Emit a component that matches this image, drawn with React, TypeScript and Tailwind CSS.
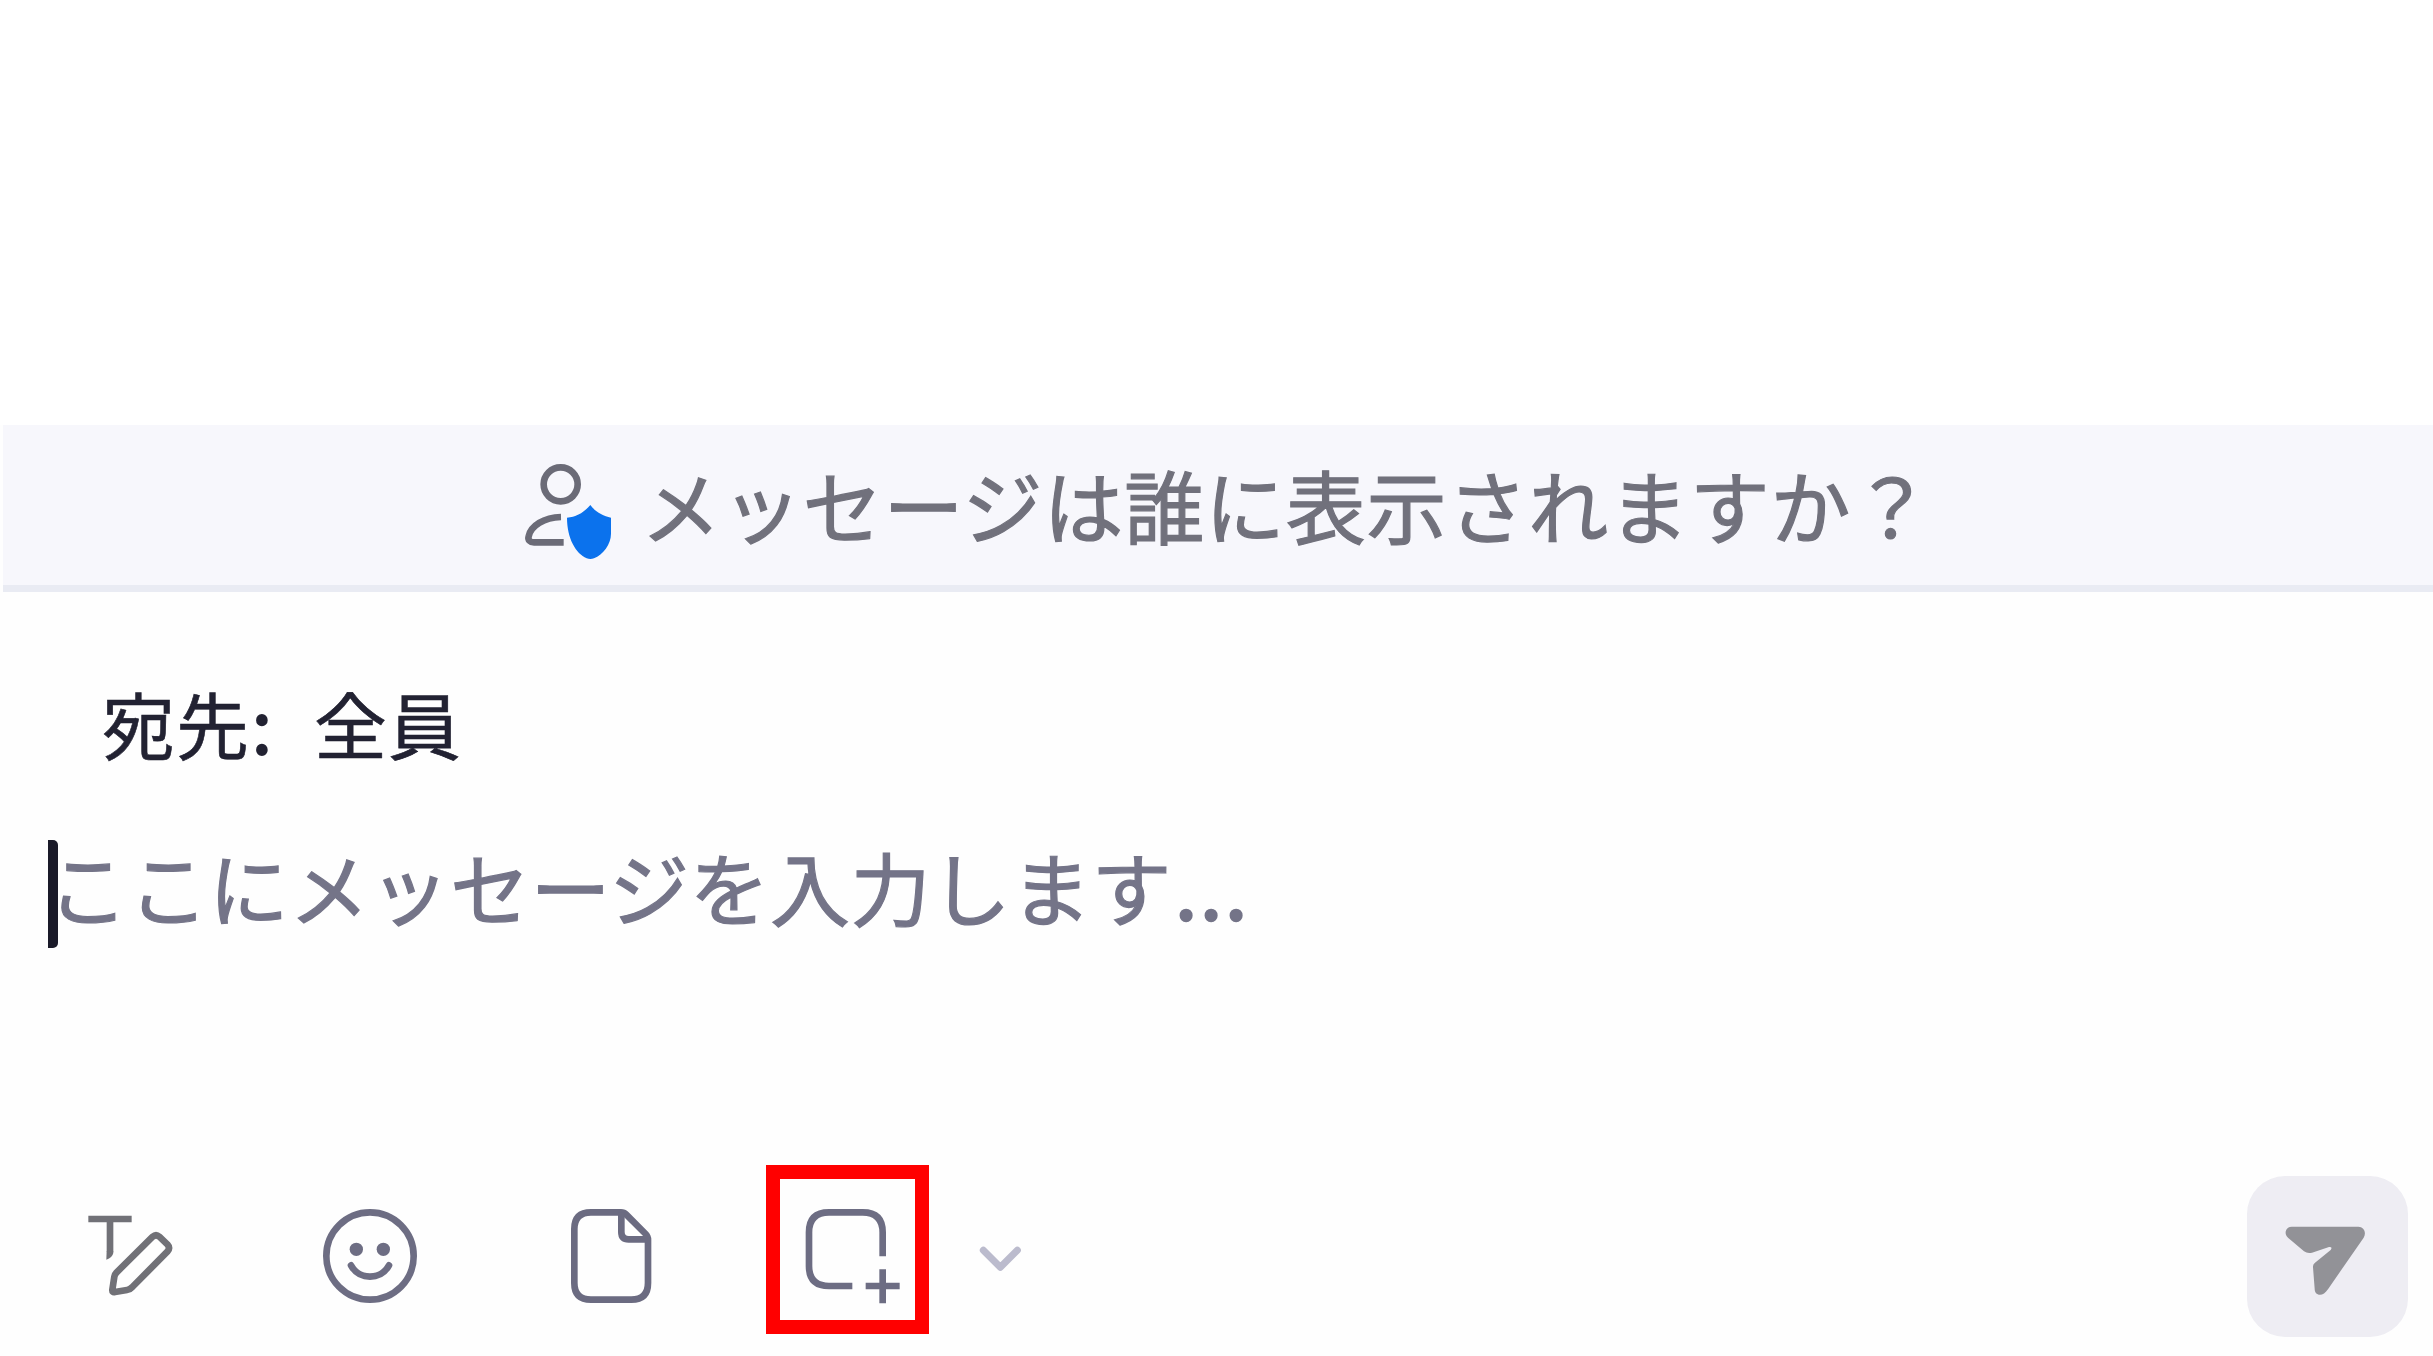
const JP = "font-['Noto_Sans_CJK_JP',sans-serif]";

function PersonShield() {
  return (
    <svg className="h-[100px] w-[92px] shrink-0" viewBox="0 0 276 300" fill="none">
      <circle cx="122" cy="73" r="51" stroke="#6b6b77" strokeWidth="20" />
      <path d="M123 171C72 172 32 198 26 229C23 240 30 247 42 247H131" stroke="#6b6b77" strokeWidth="20" />
      <path
        d="M211 135C223 153 248 168 273 173V221C273 252 249 285 222 295Q211 299 200 295C168 280 141 236 141 173C171 172 196 153 211 135Z"
        fill="#0b72ed"
      />
    </svg>
  );
}

function FormatIcon() {
  return (
    <svg className="h-[86px] w-[86px]" viewBox="84 100 258 258" fill="none" stroke="#717177" strokeWidth="20">
      <path d="M85 118H215" />
      <path d="M150 127V216" />
      <path d="M140 214H160V220Q157 234 139 240Z" fill="#717177" stroke="none" />
      <path d="M278 171Q288 162 298 171L322 194Q332 205 322 216L217 322Q210 330 201 331L165 337Q156 339 157 330L163 291Q164 284 170 278Z" strokeLinejoin="round" />
    </svg>
  );
}

function SmileIcon() {
  return (
    <svg className="h-[96px] w-[96px]" viewBox="786 85 288 288" fill="none">
      <circle cx="930" cy="229" r="131" stroke="#6d6d83" strokeWidth="20" />
      <circle cx="889" cy="209" r="20" fill="#6d6d83" />
      <circle cx="970" cy="209" r="20" fill="#6d6d83" />
      <path d="M873 257C898 302 962 302 987 257" stroke="#6d6d83" strokeWidth="20" strokeLinecap="round" />
    </svg>
  );
}

function FileIcon() {
  return (
    <svg className="h-[96px] w-[82px]" viewBox="90 85 246 288" fill="none" stroke="#6b6b81" strokeWidth="20">
      <path d="M153 98H243Q252 98 259 105L317 163Q324 170 324 180V310Q324 360 274 360H153Q103 360 103 310V148Q103 98 153 98Z" />
      <path d="M244 98V157Q244 179 266 179H324" />
    </svg>
  );
}

function AddSquareIcon() {
  return (
    <svg className="h-[96px] w-[96px]" viewBox="165 175 288 288" fill="none" stroke="#6d6d83" strokeWidth="20">
      <path d="M307 409H237Q177 409 177 349V248Q177 188 237 188H338Q398 188 398 248V320" />
      <path d="M398 359V461M347 409H449" />
    </svg>
  );
}

function ChevronIcon() {
  return (
    <svg className="h-[26px] w-[42px]" viewBox="686 285 126 78" fill="none" stroke="#bbbbcd" strokeWidth="21">
      <path d="M699 298L750 349L801 298" strokeLinecap="round" strokeLinejoin="round" />
    </svg>
  );
}

function SendIcon() {
  return (
    <svg className="h-[70px] w-[80px]" viewBox="194 227 240 210" fill="#929297">
      <path d="M214 229H414C431 229 439 247 430 262L324 415C315 428 307 433 299 433C289 433 283 426 283 415L278 351Q277 342 284 337L331 299Q338 289 326 290L275 307Q262 311 251 303L203 262C189 250 197 229 214 229Z" />
    </svg>
  );
}

export default function App() {
  return (
    <div className={`flex h-[1356px] w-[2433px] flex-col overflow-hidden bg-[#fefefe] ${JP}`}>
      <div className="h-[425px] shrink-0 bg-white" />

      <div className="ml-[3px] flex h-[167px] shrink-0 items-start border-b-[7px] border-[#e9ebf3] bg-[#f7f7fc] pt-[35px] pl-[517px]">
        <PersonShield />
        <p className="mt-[3px] ml-[29px] text-[80px] leading-[80px] tracking-[0.8px] whitespace-nowrap text-[#71717c] [-webkit-text-stroke:1.2px_#71717c]">
          メッセージは誰に表示されますか？
        </p>
      </div>

      <div className="flex shrink-0 gap-[41px] pt-[93px] pl-[102px] text-[73px] leading-[74px] whitespace-nowrap text-[#222232] [-webkit-text-stroke:0.6px_#222232]">
        <span className="tracking-[0.9px]">
          宛先<span className="ml-[2px] [-webkit-text-stroke:2px_#222232]">:</span>
        </span>
        <span className="tracking-[0.9px]">全員</span>
      </div>

      <div className="mt-[81px] flex h-[108px] shrink-0 items-start pl-[48px]">
        <div className="h-[108px] w-[10px] rounded-r-[5px] bg-[#1a1a29]" />
        <p className="mt-[5px] -ml-[10px] text-[80px] leading-[80px] tracking-[0.4px] whitespace-nowrap text-[#747488] [-webkit-text-stroke:1.2px_#747488]">
          ここにメッセージを入力します
          <span className="ml-[3px] tracking-[2.8px] [-webkit-text-stroke:2.5px_#747488]">...</span>
        </p>
      </div>

      <div className="mt-[217px] flex h-[172px] shrink-0 items-start">
        <div className="mt-[48px] ml-[88px]">
          <FormatIcon />
        </div>
        <div className="mt-[43px] ml-[148px]">
          <SmileIcon />
        </div>
        <div className="mt-[43px] ml-[152px]">
          <FileIcon />
        </div>
        <div className="ml-[114px] flex h-[169px] w-[163px] items-start border-[14px] border-[#ff0000] pt-[29px] pl-[25px]">
          <AddSquareIcon />
        </div>
        <div className="mt-[81px] ml-[50px]">
          <ChevronIcon />
        </div>
        <button className="mt-[11px] mr-[25px] ml-auto flex h-[161px] w-[161px] items-start rounded-[38px] bg-[#eeedf3] pt-[50px] pl-[38px]">
          <SendIcon />
        </button>
      </div>
    </div>
  );
}
